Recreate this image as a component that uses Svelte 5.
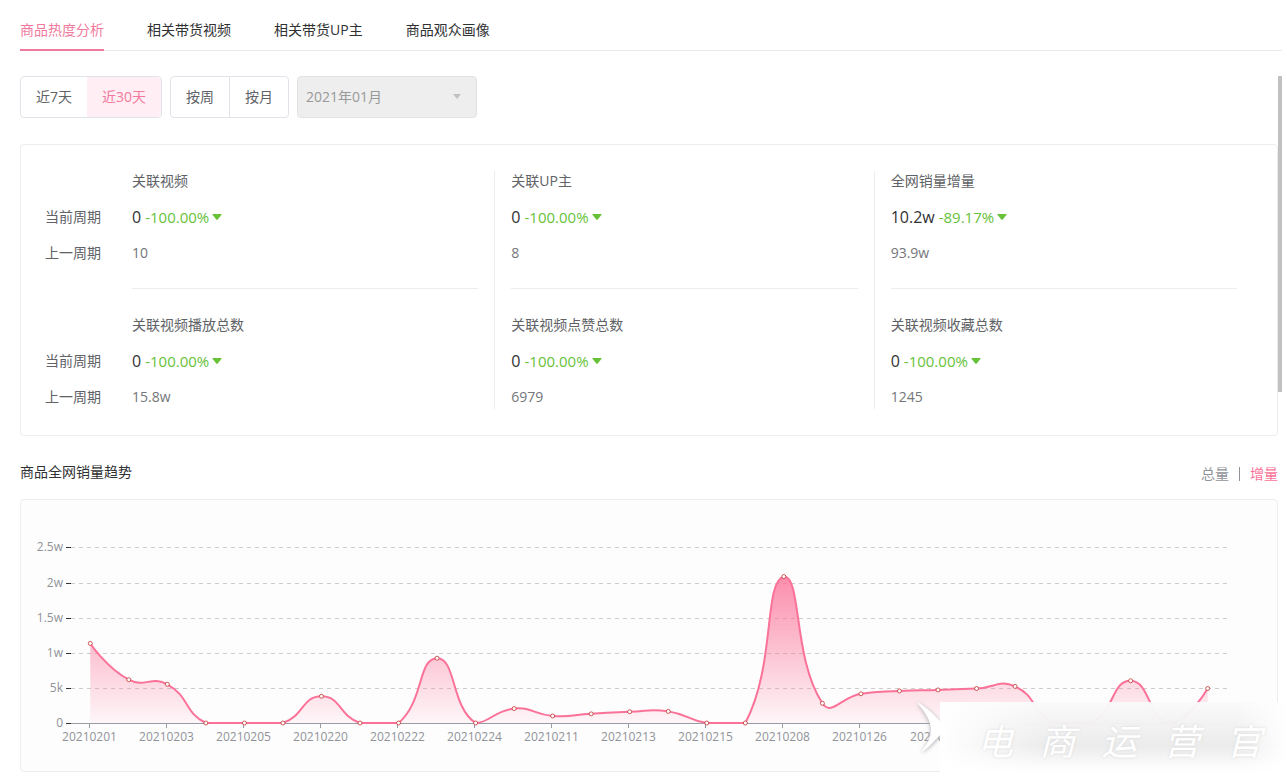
<script>
  const tabs = ['商品热度分析', '相关带货视频', '相关带货UP主', '商品观众画像'];
  let activeTab = $state(0);
  let range = $state('30');
  let mode = $state('inc');

  const columns = [
    [
      { title: '关联视频', now: '0', change: '-100.00%', before: '10' },
      { title: '关联视频播放总数', now: '0', change: '-100.00%', before: '15.8w' }
    ],
    [
      { title: '关联UP主', now: '0', change: '-100.00%', before: '8' },
      { title: '关联视频点赞总数', now: '0', change: '-100.00%', before: '6979' }
    ],
    [
      { title: '全网销量增量', now: '10.2w', change: '-89.17%', before: '93.9w' },
      { title: '关联视频收藏总数', now: '0', change: '-100.00%', before: '1245' }
    ]
  ];

  const values = [
    11300, 6150, 5500, 0, 0, 0, 3800, 0, 0, 9200, 0, 2050, 1000, 1300, 1600,
    1650, 0, 0, 20800, 2800, 4150, 4550, 4700, 4900, 5200, 0, 0, 6000, 0, 4900
  ];
  const labels = [
    '20210201', '20210203', '20210205', '20210220', '20210222', '20210224',
    '20210211', '20210213', '20210215', '20210208', '20210126', '20210128'
  ];
  const yTicks = [
    [0, '0'], [5000, '5k'], [10000, '1w'], [15000, '1.5w'], [20000, '2w'], [25000, '2.5w']
  ];

  let width = $state(1256);
  const left = 50;
  const right = 50;
  const base = 223;
  const plotHeight = 176;

  const step = $derived((width - left - right) / values.length);
  const yOf = (v) => base - (v / 25000) * plotHeight;
  const points = $derived(values.map((v, i) => [left + step * (i + 0.5), yOf(v)]));

  // Smooth bezier line whose control points stay inside the data's bounds.
  function smoothLine(pts) {
    const top = Math.min(...pts.map((p) => p[1]));
    const clamp = (y) => Math.max(top, Math.min(base, y));
    let d = `M${pts[0][0]},${pts[0][1]}`;
    let out = pts[0];
    for (let i = 1; i < pts.length; i++) {
      const p = pts[i];
      const prev = pts[i - 1];
      const next = pts[i + 1];
      let into = p;
      let after = p;
      if (next) {
        const a = Math.hypot(p[0] - prev[0], p[1] - prev[1]);
        const b = Math.hypot(next[0] - p[0], next[1] - p[1]);
        const r = b / (a + b);
        const vx = (next[0] - prev[0]) * 0.5;
        const vy = (next[1] - prev[1]) * 0.5;
        into = [p[0] - vx * (1 - r), clamp(p[1] - vy * (1 - r))];
        after = [p[0] + vx * r, clamp(p[1] + vy * r)];
      }
      d += `C${out[0]},${out[1]} ${into[0]},${into[1]} ${p[0]},${p[1]}`;
      out = after;
    }
    return d;
  }
  const line = $derived(smoothLine(points));
  const area = $derived(`${line}L${points[points.length - 1][0]},${base}L${points[0][0]},${base}Z`);
</script>

<div class="page">
  <nav class="tabs">
    {#each tabs as tab, i}
      <button class:active={activeTab === i} onclick={() => (activeTab = i)}>{tab}</button>
    {/each}
  </nav>

  <main>
    <div class="scroll-thumb"></div>
    <div class="filters">
      <div class="group">
        <button class:on={range === '7'} onclick={() => (range = '7')}>近7天</button>
        <button class:on={range === '30'} onclick={() => (range = '30')}>近30天</button>
      </div>
      <div class="group split">
        <button class:on={range === 'week'} onclick={() => (range = 'week')}>按周</button>
        <button class:on={range === 'month'} onclick={() => (range = 'month')}>按月</button>
      </div>
      <div class="picker">
        <select disabled aria-label="月份"><option>2021年01月</option></select>
        <svg width="8" height="5" viewBox="0 0 8 5"><path d="M0 0H8L4 5Z" fill="#bfc1c5" /></svg>
      </div>
    </div>

    <section class="card stats">
      <div class="periods">
        {#each [0, 1] as block}
          <div class="block">
            <span></span><span>当前周期</span><span>上一周期</span>
          </div>
        {/each}
      </div>
      {#each columns as column}
        <div class="column">
          {#each column as item}
            <div class="block">
              <span>{item.title}</span>
              <span class="now">
                <b>{item.now}</b>
                <em>{item.change}</em>
                <svg width="10" height="6" viewBox="0 0 10 6"><path d="M1 0H9Q10 0 9.400 .9L5.700 5.500Q5 6.300 4.300 5.500L.6 .9Q0 0 1 0Z" fill="#67c23a" /></svg>
              </span>
              <span class="before">{item.before}</span>
            </div>
          {/each}
        </div>
      {/each}
    </section>

    <header>
      <h2>商品全网销量趋势</h2>
      <div class="modes">
        <button class:on={mode === 'all'} onclick={() => (mode = 'all')}>总量</button>
        <i></i>
        <button class:on={mode === 'inc'} onclick={() => (mode = 'inc')}>增量</button>
      </div>
    </header>

    <section class="card chart" bind:clientWidth={width}>
      <svg {width} height="271">
        <defs>
          <linearGradient id="fill" gradientUnits="userSpaceOnUse" x1="0" y1="77" x2="0" y2="223">
            <stop offset="0" stop-color="#fb7299" stop-opacity="0.8" />
            <stop offset="1" stop-color="#fb7299" stop-opacity="0.05" />
          </linearGradient>
        </defs>
        {#each yTicks as [v, text]}
          {@const y = Math.ceil(yOf(v)) + 0.5}
          {#if v > 0}
            <line x1={left} x2={width - right} y1={y} y2={y} stroke="#ccc" stroke-dasharray="4 4" />
          {/if}
          <line x1={left - 5} x2={left} y1={y} y2={y} stroke="#333" />
          <text x={left - 8} y={y + 3} text-anchor="end">{text}</text>
        {/each}
        <line x1={left} x2={width - right} y1={base + 0.5} y2={base + 0.5} stroke="#999ca3" />
        {#each labels as label, i}
          {@const x = Math.floor(points[i * 2][0]) - 0.5}
          <line x1={x} x2={x} y1={base} y2={base + 5} stroke="#999ca3" />
          <text {x} y={base + 18} text-anchor="middle">{label}</text>
        {/each}
        <path d={area} fill="url(#fill)" />
        <path d={line} fill="none" stroke="#fb7299" stroke-width="2" />
        {#each points as [x, y]}
          <circle cx={x} cy={y} r="2" fill="#fff" stroke="#c23531" stroke-opacity="0.8" />
        {/each}
      </svg>
    </section>
  </main>

  <div class="brand">
    <svg class="mark" width="30" height="54" viewBox="0 0 30 54">
      <path d="M0 1C10 6 18 15 25 22V32C19 38 12 47 4 51C10 43 14 37 14 29C14 19 7 10 0 1Z" fill="#fff" />
    </svg>
    <div class="plate">
      <span>电</span><span>商</span><span>运</span><span>营</span><span>官</span>
    </div>
  </div>
</div>

<style>
  :global(body) {
    margin: 0;
    background: #fff;
  }
  .page {
    position: relative;
    box-sizing: border-box;
    padding: 10px 5px 3px 20px;
    font: 14px/20px 'Open Sans', 'Noto Sans CJK SC', sans-serif;
    color: #606266;
    overflow: hidden;
  }
  button,
  select {
    margin: 0;
    padding: 0;
    border: 0;
    background: none;
    font: inherit;
    color: inherit;
    cursor: pointer;
  }
  .tabs {
    display: flex;
    gap: 43px;
    height: 40px;
    border-bottom: 1px solid #e8eaee;
  }
  .tabs button {
    height: 41px;
    border-bottom: 2px solid transparent;
    color: #303133;
  }
  .tabs .active {
    border-color: #f07a9e;
    color: #f07a9e;
  }
  main {
    position: relative;
    padding: 25px 4px 0 0;
  }
  .scroll-thumb {
    position: absolute;
    top: 25px;
    right: 0;
    width: 4px;
    height: 316px;
    background: #c1c1c1;
  }
  .filters {
    display: flex;
    gap: 8px;
  }
  .group {
    display: flex;
    height: 40px;
    border: 1px solid #e0e3e9;
    border-radius: 4px;
    overflow: hidden;
  }
  .group button {
    padding: 0 15px;
  }
  .split button + button {
    border-left: 1px solid #e0e3e9;
  }
  .group .on {
    background: #ffeef3;
    color: #f5799d;
  }
  .picker {
    position: relative;
    width: 180px;
  }
  .picker select {
    appearance: none;
    box-sizing: border-box;
    width: 100%;
    height: 42px;
    padding: 0 8px;
    border: 1px solid #e0e3e6;
    border-radius: 4px;
    background: #eee;
    color: #999;
    opacity: 1;
  }
  .picker svg {
    position: absolute;
    right: 16px;
    top: 18px;
  }
  .card {
    border: 1px solid #ebedf0;
    border-radius: 4px;
  }
  .stats {
    display: flex;
    margin-top: 26px;
    padding: 26px 24px;
  }
  .periods {
    width: 71px;
  }
  .column {
    flex: 1;
    padding: 0 16px;
  }
  .column:not(:last-child) {
    border-right: 1px solid #ebedf0;
  }
  .block {
    display: grid;
    grid-template-rows: repeat(3, 20px);
    gap: 16px;
    padding-bottom: 25px;
  }
  .block + .block {
    padding: 27px 0 2px;
  }
  .column .block + .block {
    padding-top: 26px;
    border-top: 1px solid #ebedf0;
  }
  .now {
    display: flex;
    align-items: center;
    gap: 4px;
  }
  b {
    font-size: 16px;
    font-weight: 400;
    color: #303133;
  }
  em {
    font-size: 15px;
    font-style: normal;
    color: #67c23a;
  }
  .now svg {
    margin-left: -1px;
  }
  .before {
    color: #73767a;
  }
  header {
    display: flex;
    justify-content: space-between;
    align-items: flex-start;
    margin: 26px 0 15px;
  }
  h2 {
    margin: 0;
    font: inherit;
    color: #303133;
  }
  .modes {
    display: flex;
    align-items: center;
    gap: 10px;
    padding-top: 2px;
    color: #909399;
  }
  .modes i {
    width: 1px;
    height: 14px;
    background: #909399;
  }
  .modes .on {
    color: #fb7299;
  }
  .chart {
    background: #fdfdfd;
    overflow: hidden;
  }
  .chart svg {
    display: block;
  }
  text {
    font-size: 12px;
    fill: #909399;
  }
  .brand {
    position: absolute;
    right: 0;
    bottom: 0;
    display: flex;
    align-items: flex-end;
  }
  .mark {
    margin: 0 -7px 20px 0;
    filter: drop-shadow(0 1px 2px #aaa);
  }
  .plate {
    position: relative;
    display: flex;
    align-items: center;
    justify-content: space-around;
    box-sizing: border-box;
    width: 347px;
    height: 73px;
    padding: 0 12px 0 24px;
    background:
      linear-gradient(90deg, #fff, #fff0 30%, #fff0 85%, #fff),
      linear-gradient(#fafafaf7, #ebebebf7 60%, #fffffff7 95%);
    font: italic 400 36px/60px 'Noto Sans CJK SC', sans-serif;
    color: #fff;
    text-shadow: 0 0 3px #d8d8d8;
  }
</style>
